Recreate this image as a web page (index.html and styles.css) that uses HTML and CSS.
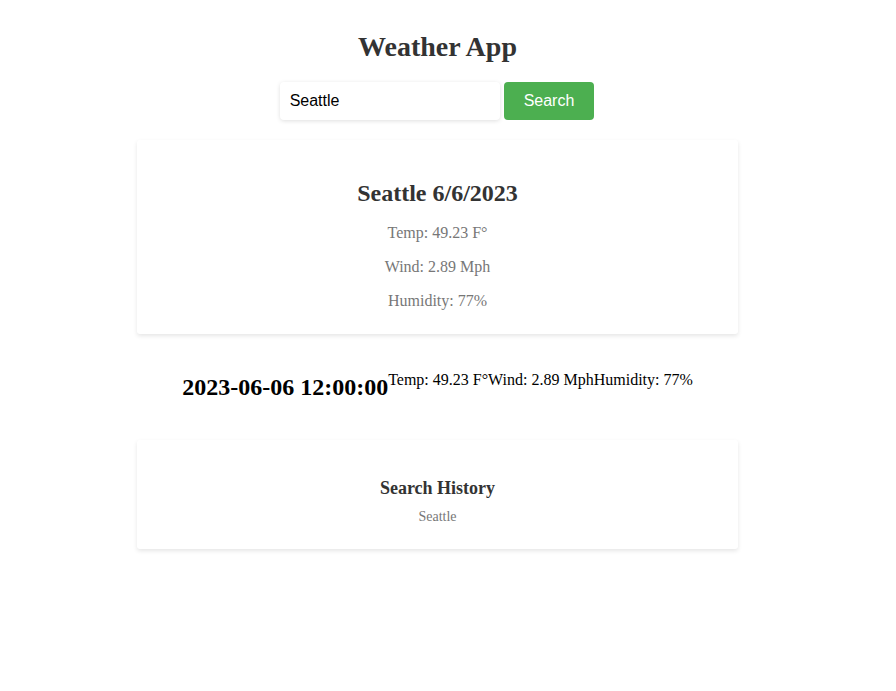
FILE: index.html
```html
<!DOCTYPE html>
<html>
<head>
<meta charset="utf-8">
<title>Weather App</title>
<link rel="stylesheet" href="styles.css">
</head>
<body>
<div class="app">
  <h1 class="title">Weather App</h1>
  <form class="search">
    <input class="search-input" type="text" value="Seattle">
    <button class="search-btn" type="button">Search</button>
  </form>
  <section class="card current">
    <h2 class="current-title">Seattle 6/6/2023</h2>
    <p class="stat">Temp: 49.23 F°</p>
    <p class="stat">Wind: 2.89 Mph</p>
    <p class="stat">Humidity: 77%</p>
  </section>
  <div class="forecast">
    <h2 class="forecast-date">2023-06-06 12:00:00</h2>
    <p class="forecast-stat">Temp: 49.23 F°</p>
    <p class="forecast-stat">Wind: 2.89 Mph</p>
    <p class="forecast-stat">Humidity: 77%</p>
  </div>
  <section class="card history">
    <h3 class="history-title">Search History</h3>
    <div class="history-item">Seattle</div>
  </section>
</div>
</body>
</html>
```
FILE: styles.css
```css
html, body {
  margin: 0;
  padding: 0;
  background: #fff;
}
body {
  font-family: "Liberation Serif", "Times New Roman", serif;
}
.app {
  width: 875px;
  padding-top: 12px;
  text-align: center;
}
.title {
  font-size: 28px;
  font-weight: bold;
  color: #333;
  margin: 18.76px 0;
  line-height: normal;
}
.search {
  display: flex;
  justify-content: center;
  gap: 4px;
  margin: 0 0 20px;
  padding-right: 1px;
}
.search-input {
  width: 220px;
  box-sizing: border-box;
  padding: 10px;
  font-family: "Liberation Sans", Arial, sans-serif;
  font-size: 16px;
  color: #000;
  border: none;
  border-radius: 4px;
  box-shadow: 0 1px 4px rgba(0, 0, 0, 0.13);
  outline: none;
  background: #fff;
}
.search-btn {
  padding: 10px 20px;
  font-family: "Liberation Sans", Arial, sans-serif;
  font-size: 16px;
  color: #fff;
  background: #4caf50;
  border: none;
  border-radius: 4px;
  cursor: pointer;
}
.card {
  width: 601px;
  box-sizing: border-box;
  margin: 0 auto 20px;
  background: #fff;
  border-radius: 3px;
  box-shadow: 0 2px 4px rgba(0, 0, 0, 0.1);
}
.current {
  padding: 20px 20px 8px;
  display: flow-root;
}
.current-title {
  font-size: 24px;
  font-weight: bold;
  color: #333;
  margin: 20px 0 17px;
}
.stat {
  font-size: 16px;
  color: #777;
  margin: 16px 0;
}
.forecast {
  display: flex;
  justify-content: center;
  align-items: flex-start;
  padding-top: 1px;
  margin-bottom: 20px;
}
.forecast-date {
  font-size: 24px;
  font-weight: bold;
  color: #000;
  margin: 19px 0;
}
.forecast-stat {
  font-size: 16px;
  color: #000;
  margin: 16px 0;
}
.history {
  padding: 20px 20px 24px;
  display: flow-root;
}
.history-title {
  font-size: 18px;
  font-weight: bold;
  color: #333;
  margin: 18px 0 10px;
}
.history-item {
  font-size: 14px;
  color: #777;
}
```
